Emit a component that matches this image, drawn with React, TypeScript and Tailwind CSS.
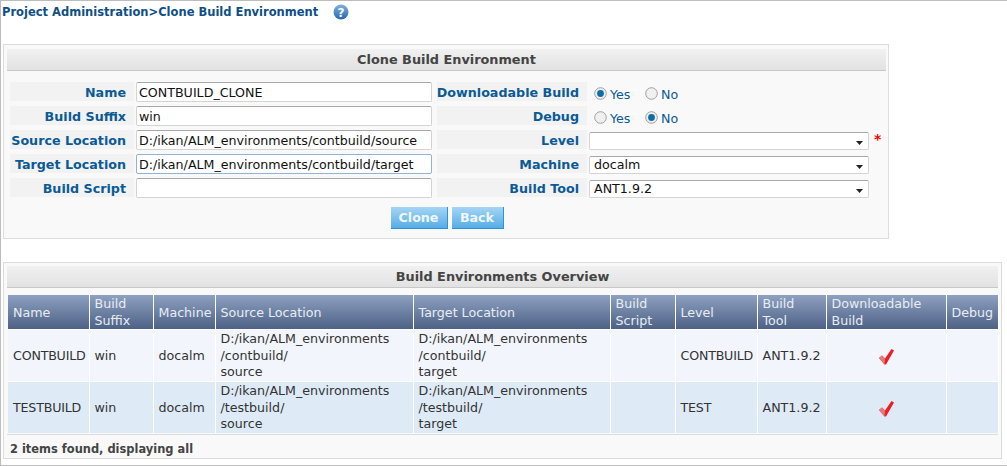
const font = "font-['DejaVu_Sans',Verdana,sans-serif]";

function Label({ children }: { children: string }) {
  return (
    <div className="flex h-[19px] justify-end whitespace-nowrap bg-[#f2f2f2] pr-2 text-[12.7px] font-bold leading-[22px] text-[#0b5a96]">
      {children}
    </div>
  );
}

function TextInput({ value, focus }: { value: string; focus?: boolean }) {
  return (
    <div
      className={`h-[20px] whitespace-nowrap rounded-[2px] border bg-white pl-[2px] text-[12.65px] leading-[19px] text-[#111] ${
        focus ? "border-[#8fb4d6]" : "border-[#d4d4d4] border-t-[#a8a8a8]"
      }`}
    >
      {value}
    </div>
  );
}

function Select({ value }: { value: string }) {
  return (
    <div className="mt-[2px] flex h-[18px] w-[280px] items-center justify-between rounded-[2px] border border-[#d4d4d4] border-t-[#a8a8a8] bg-white pl-[4px] pr-[5px] text-[12.65px] leading-[16px] text-[#111]">
      <span>{value}</span>
      <svg width="7" height="4" viewBox="0 0 7 4" className="mt-[4px]">
        <path d="M0 0h7L3.5 4z" fill="#222" />
      </svg>
    </div>
  );
}

function Radio({ on }: { on?: boolean }) {
  return (
    <svg width="13" height="13" viewBox="0 0 13 13" className="mt-[3px]">
      <circle cx="6.5" cy="6.5" r="5.8" fill="#f0f0f0" stroke="#a0a0a0" />
      {on && <circle cx="6.5" cy="6.5" r="3.4" fill="#0b6ea8" />}
    </svg>
  );
}

function RadioPair({ yes }: { yes: boolean }) {
  return (
    <div className="flex h-[19px] items-center pl-[5px] text-[12.65px] text-[#0b5a96]">
      <Radio on={yes} />
      <span className="ml-[3px] mt-[8px] w-[35px]">Yes</span>
      <Radio on={!yes} />
      <span className="ml-[3px] mt-[8px]">No</span>
    </div>
  );
}

function PanelHeader({ children }: { children: string }) {
  return (
    <div className="h-[22px] border-b border-[#c8c8c8] bg-gradient-to-b from-[#f1f1f1] to-[#e2e2e2] text-center text-[12.85px] font-bold leading-[21px] text-[#444]">
      {children}
    </div>
  );
}

function Btn({ children, w }: { children: string; w: string }) {
  return (
    <div
      className={`h-[22px] ${w} border-b border-r border-[#2b93d6] bg-gradient-to-b from-[#a4d5f3] to-[#55ade6] text-center text-[12.65px] font-bold leading-[21px] text-[#eef7fd]`}
    >
      {children}
    </div>
  );
}

function Check() {
  return (
    <svg width="15" height="16" viewBox="0 0 15 16" className="mx-auto mt-[2px]">
      <path d="M0 9 3 6.5 6 9.5 12.5 0 15 1.5 7 15.5 5.5 15.5z" fill="#ee1c25" />
      <path d="M0 9 3 6.5 6 9.5 5.5 15.5z" fill="#e8777c" />
    </svg>
  );
}

const cols = [
  { h: "Name", w: "w-[81px]" },
  { h: "Build\nSuffix", w: "w-[64px]" },
  { h: "Machine", w: "w-[62px]" },
  { h: "Source Location", w: "w-[198px]" },
  { h: "Target Location", w: "w-[197px]" },
  { h: "Build\nScript", w: "w-[65px]" },
  { h: "Level", w: "w-[82px]" },
  { h: "Build\nTool", w: "w-[69px]" },
  { h: "Downloadable\nBuild", w: "w-[120px]" },
  { h: "Debug", w: "w-[52px]" },
];

const rows = [
  { name: "CONTBUILD", dir: "contbuild", level: "CONTBUILD", bg: "bg-[#f2f6fc]" },
  { name: "TESTBUILD", dir: "testbuild", level: "TEST", bg: "bg-[#deebf7]" },
];

const td = "border-r border-white pl-[5px] pr-0 pt-[1px] align-middle";

export default function App() {
  return (
    <div className={`${font} h-[466px] w-[1007px] overflow-hidden border-l border-t border-b border-[#bdbdbd] bg-white`}>
      <div className="flex h-[43px] items-start pl-[1px] pt-[3px]">
        <span className="text-[11.5px] font-bold leading-[17px] text-[#0f4f86]">
          Project Administration&gt;Clone Build Environment
        </span>
        <svg width="16" height="16" viewBox="0 0 16 16" className="ml-[15px]">
          <defs>
            <linearGradient id="h" x1="0" y1="0" x2="0" y2="1">
              <stop offset="0" stopColor="#7fb2e0" />
              <stop offset="1" stopColor="#2468ad" />
            </linearGradient>
          </defs>
          <circle cx="8" cy="8" r="7.5" fill="url(#h)" />
          <text x="8" y="12.5" textAnchor="middle" fontSize="12" fontWeight="700" fill="#fff" fontFamily="DejaVu Sans">
            ?
          </text>
        </svg>
      </div>

      <section className="ml-[2px] h-[195px] w-[886px] border border-[#dcdcdc] bg-[#f9f9f9] pl-[3px] pr-[2px] pt-[4px]">
        <PanelHeader>Clone Build Environment</PanelHeader>
        <div className="ml-[3px] mt-[11px] grid grid-cols-[124px_298px_155px_auto] gap-y-[4px]">
          <Label>Name</Label>
          <div className="ml-[2px]"><TextInput value="CONTBUILD_CLONE" /></div>
          <div className="ml-[5px]"><Label>Downloadable Build</Label></div>
          <div className="ml-[2px]"><RadioPair yes={true} /></div>

          <Label>Build Suffix</Label>
          <div className="ml-[2px]"><TextInput value="win" /></div>
          <div className="ml-[5px]"><Label>Debug</Label></div>
          <div className="ml-[2px]"><RadioPair yes={false} /></div>

          <Label>Source Location</Label>
          <div className="ml-[2px]"><TextInput value="D:/ikan/ALM_environments/contbuild/source" /></div>
          <div className="ml-[5px]"><Label>Level</Label></div>
          <div className="ml-[2px] flex">
            <Select value="" />
            <span className="ml-[5px] text-[14px] font-bold leading-[18px] text-[#f00]">*</span>
          </div>

          <Label>Target Location</Label>
          <div className="ml-[2px]"><TextInput value="D:/ikan/ALM_environments/contbuild/target" focus /></div>
          <div className="ml-[5px]"><Label>Machine</Label></div>
          <div className="ml-[2px]"><Select value="docalm" /></div>

          <Label>Build Script</Label>
          <div className="ml-[2px]"><TextInput value="" /></div>
          <div className="ml-[5px]"><Label>Build Tool</Label></div>
          <div className="ml-[2px]"><Select value="ANT1.9.2" /></div>
        </div>
        <div className="mt-[9px] flex justify-center gap-[4px] pl-[1px]">
          <Btn w="w-[57px]">Clone</Btn>
          <Btn w="w-[52px]">Back</Btn>
        </div>
      </section>

      <section className="ml-[2px] mt-[23px] h-[197px] w-[999px] border border-[#dcdcdc] bg-[#f9f9f9] pl-[3px] pr-[3px] pt-[3px]">
        <PanelHeader>Build Environments Overview</PanelHeader>
        <table className="ml-[1px] mt-[7px] w-[990px] table-fixed border-collapse text-[12.65px] text-[#333]">
          <colgroup>
            {cols.map((c) => (
              <col key={c.h} className={c.w} />
            ))}
          </colgroup>
          <thead>
            <tr className="h-[34px] bg-gradient-to-b from-[#8ea1c1] to-[#4c6084]">
              {cols.map((c) => (
                <th key={c.h} className="whitespace-pre-line border-r border-white pl-[5px] pr-0 text-left align-middle font-normal leading-[17px] text-[#e8edf4]">
                  {c.h}
                </th>
              ))}
            </tr>
          </thead>
          <tbody>
            {rows.map((r) => (
              <tr key={r.name} className={`h-[51px] ${r.bg} border-t border-white leading-[16.67px]`}>
                <td className={`${td} pl-[4px] tracking-[-0.2px]`}>{r.name}</td>
                <td className={td}>win</td>
                <td className={td}>docalm</td>
                <td className={`${td} pl-[4px]`}>
                  D:/ikan/ALM_environments
                  <br />/{r.dir}/
                  <br />source
                </td>
                <td className={`${td} pl-[4px]`}>
                  D:/ikan/ALM_environments
                  <br />/{r.dir}/
                  <br />target
                </td>
                <td className={td}></td>
                <td className={`${td} pl-[4px] tracking-[-0.2px]`}>{r.level}</td>
                <td className={`${td} pl-[4px]`}>ANT1.9.2</td>
                <td className="border-r border-white p-0 align-middle"><Check /></td>
                <td className={td}></td>
              </tr>
            ))}
          </tbody>
        </table>
        <div className="mt-[1px] h-[25px] border-t border-[#dcdcdc] pl-[3px] text-[11.45px] font-bold leading-[28px] text-[#444]">
          2 items found, displaying all
        </div>
      </section>
    </div>
  );
}
